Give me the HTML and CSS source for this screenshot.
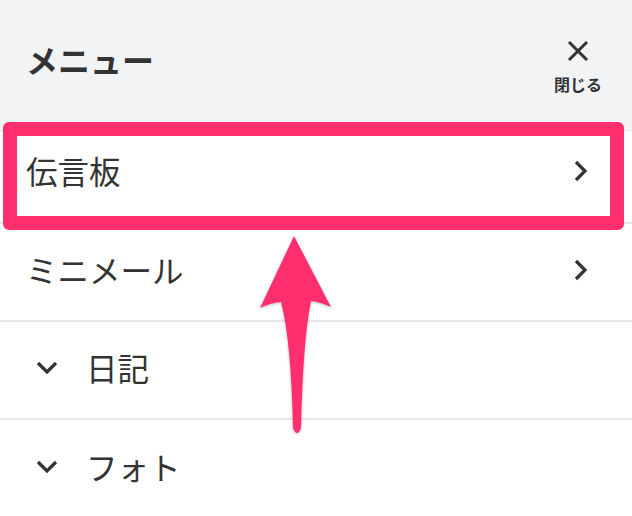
FILE: index.html
```html
<!DOCTYPE html>
<html lang="ja">
<head>
<meta charset="utf-8">
<title>メニュー</title>
<link rel="stylesheet" href="styles.css">
</head>
<body>
<div class="menu">
  <header class="menu-header">
    <h1 class="menu-title">メニュー</h1>
    <button class="close-btn" type="button">
      <svg class="close-icon" width="22" height="22" viewBox="0 0 22 22" aria-hidden="true">
        <path d="M2 2 L20 20 M20 2 L2 20" fill="none" stroke="#333" stroke-width="3"/>
      </svg>
      <span class="close-label">閉じる</span>
    </button>
  </header>
  <ul class="menu-list">
    <li class="menu-item menu-item-first">
      <span class="item-label">伝言板</span>
      <svg class="chev-right" width="14" height="22" viewBox="0 0 14 22" aria-hidden="true">
        <path d="M2 2 L11 11 L2 20" fill="none" stroke="#333" stroke-width="3.2"/>
      </svg>
    </li>
    <li class="menu-item">
      <span class="item-label">ミニメール</span>
      <svg class="chev-right" width="14" height="22" viewBox="0 0 14 22" aria-hidden="true">
        <path d="M2 2 L11 11 L2 20" fill="none" stroke="#333" stroke-width="3.2"/>
      </svg>
    </li>
    <li class="menu-item">
      <svg class="chev-down" width="22" height="14" viewBox="0 0 22 14" aria-hidden="true">
        <path d="M2 2 L11 11 L20 2" fill="none" stroke="#333" stroke-width="3.2"/>
      </svg>
      <span class="item-label">日記</span>
    </li>
    <li class="menu-item menu-item-last">
      <svg class="chev-down" width="22" height="14" viewBox="0 0 22 14" aria-hidden="true">
        <path d="M2 2 L11 11 L20 2" fill="none" stroke="#333" stroke-width="3.2"/>
      </svg>
      <span class="item-label">フォト</span>
    </li>
  </ul>
  <div class="highlight"></div>
  <svg class="arrow" width="632" height="516" viewBox="0 0 632 516" aria-hidden="true">
    <path d="M294,236 L331,307 Q320,302 311,301 Q303,340 301,428 Q297,438 293,428 Q291,340 281,302 Q270,303 260,308 Z" fill="#ff2e6d"/>
  </svg>
</div>
</body>
</html>
```

FILE: styles.css
```css
* { box-sizing: border-box; }
html, body {
  margin: 0;
  padding: 0;
  background: #ffffff;
}
body {
  font-family: "Noto Sans CJK JP", "Noto Sans", sans-serif;
  color: #333333;
  width: 632px;
  height: 516px;
  overflow: hidden;
}
.menu {
  position: relative;
  width: 632px;
  height: 516px;
}
.menu-header {
  height: 131px;
  background: #f2f3f5;
  border-bottom: 1px solid #e4e4e8;
  display: flex;
  justify-content: space-between;
  align-items: flex-start;
  padding: 40px 30px 0 26px;
}
.menu-title {
  margin: 3px 0 0 0;
  font-size: 32px;
  line-height: 1;
  font-weight: 700;
  color: #333;
}
.close-btn {
  display: flex;
  flex-direction: column;
  align-items: center;
  background: none;
  border: 0;
  padding: 0;
  margin: 0;
  font-family: inherit;
  color: #333;
}
.close-icon { display: block; }
.close-label {
  margin-top: 14px;
  font-size: 16px;
  line-height: 1;
  font-weight: 700;
}
.menu-list {
  list-style: none;
  margin: 0;
  padding: 0;
}
.menu-item {
  height: 98px;
  border-bottom: 2px solid #e6e6ea;
  display: flex;
  align-items: center;
  padding: 0 44px 4px 26px;
}
.menu-item-first {
  height: 93px;
  padding-bottom: 11px;
}
.menu-item-last { border-bottom: 0; }
.item-label {
  font-size: 31.5px;
  line-height: 1;
  font-weight: 400;
  flex: 1;
}
.chev-right { display: block; flex: none; }
.chev-down {
  display: block;
  flex: none;
  margin: 0 28px 0 10px;
}
.highlight {
  position: absolute;
  left: 3px;
  top: 122px;
  width: 621px;
  height: 108px;
  border: 14px solid #ff2e6d;
  border-radius: 6px;
}
.arrow {
  position: absolute;
  left: 0;
  top: 0;
  filter: drop-shadow(0 1px 1.5px rgba(0,0,0,0.25));
}
```
